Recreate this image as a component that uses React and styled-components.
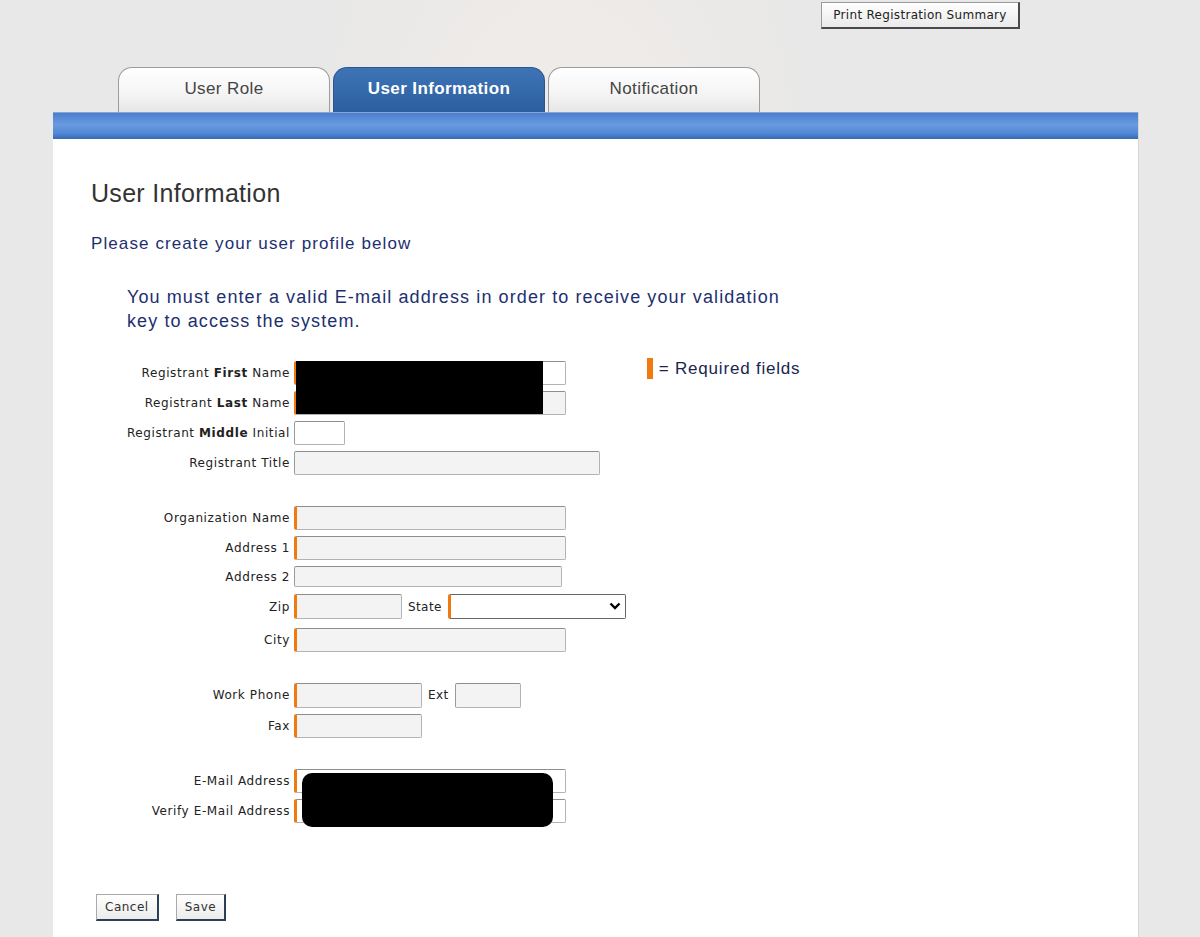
import React from "react";
import styled, { createGlobalStyle } from "styled-components";

const GlobalStyle = createGlobalStyle`
  html, body {
    margin: 0;
    padding: 0;
    background: #e8e8e8;
    font-family: "Liberation Sans", Arial, sans-serif;
  }
`;

const Page = styled.div`
  width: 1200px;
  height: 937px;
  overflow: hidden;
  background: radial-gradient(ellipse at 560px 140px, #f1ece8 0%, #e8e8e8 30%);
`;

const TopBar = styled.div`
  display: flex;
  justify-content: flex-end;
  padding: 2px 180px 0 0;
  height: 27px;
`;

const PrintButton = styled.button`
  width: 199px;
  height: 27px;
  font-family: "DejaVu Sans", Verdana, sans-serif;
  font-size: 12px;
  letter-spacing: 0.3px;
  color: #222;
  background: linear-gradient(#ffffff, #e9e9e9);
  border: 1px solid #9a9a9a;
  border-right: 2px solid #4a4a4a;
  border-bottom: 2px solid #4a4a4a;
  padding: 0;
`;

const Tabs = styled.div`
  display: flex;
  gap: 3px;
  margin: 38px 0 0 118px;
  height: 45px;
`;

const Tab = styled.div`
  width: 212px;
  height: 45px;
  box-sizing: border-box;
  display: flex;
  align-items: center;
  justify-content: center;
  border-radius: 14px 14px 0 0;
  border: 1px solid ${(p) => (p.$active ? "#2a5590" : "#9c9c9c")};
  border-bottom: none;
  background: ${(p) =>
    p.$active
      ? "linear-gradient(#3e74b6, #2b5f9f)"
      : "linear-gradient(#ffffff, #f4f4f4 60%, #e6e6e6)"};
  color: ${(p) => (p.$active ? "#ffffff" : "#444")};
  font-size: 17px;
  letter-spacing: 0.4px;
  font-weight: ${(p) => (p.$active ? "bold" : "normal")};
  padding-bottom: 2px;
`;

const Panel = styled.div`
  margin-left: 53px;
  width: 1085px;
  background: #fff;
  border-right: 1px solid #d6d6d6;
  height: 830px;
`;

const BlueBar = styled.div`
  height: 26px;
  background: linear-gradient(#4a7fcf, #6a9ae0 45%, #4f86d4 80%, #3669b0);
  border-top: 1px solid #8aa6cf;
`;

const Content = styled.div`
  padding: 40px 0 0 38px;
`;

const Heading = styled.h2`
  margin: 0;
  font-size: 25px;
  font-weight: normal;
  letter-spacing: 0.3px;
  color: #333;
  line-height: 28px;
`;

const Intro = styled.p`
  margin: 25px 0 0;
  font-size: 17px;
  letter-spacing: 1.1px;
  color: #1d2f6f;
  line-height: 24px;
`;

const Notice = styled.p`
  margin: 29px 0 0 36px;
  width: 680px;
  font-size: 18px;
  letter-spacing: 1.1px;
  color: #1d2f6f;
  line-height: 24px;
`;

const FormArea = styled.div`
  display: flex;
  align-items: flex-start;
  margin-top: 25px;
`;

const Form = styled.div`
  position: relative;
`;

const Row = styled.div`
  display: flex;
  align-items: center;
  height: ${(p) => p.$h || 30}px;
  margin-top: ${(p) => p.$mt || 0}px;
`;

const Label = styled.label`
  width: 199px;
  text-align: right;
  font-family: "DejaVu Sans", Verdana, sans-serif;
  font-size: 12px;
  letter-spacing: 0.6px;
  color: #222;
  padding-right: 4px;
  flex-shrink: 0;
  white-space: nowrap;
`;

const InlineLabel = styled.label`
  font-family: "DejaVu Sans", Verdana, sans-serif;
  font-size: 12px;
  letter-spacing: 0.4px;
  color: #222;
  margin: 0 6px 0 6px;
`;

const Input = styled.input`
  box-sizing: border-box;
  width: ${(p) => p.$w}px;
  height: ${(p) => p.$hh || 24}px;
  background: ${(p) => (p.$white ? "#fff" : "#f3f3f3")};
  border: 1px solid #b3b3b3;
  border-top-color: #8e8e8e;
  border-left: ${(p) => (p.$req ? "3px solid #f07a10" : "1px solid #9a9a9a")};
  border-radius: 2px;
  padding: 0 4px;
  font-size: 12px;
`;

const SelectWrap = styled.div`
  position: relative;
  width: 178px;
  height: 25px;
`;

const Select = styled.select`
  appearance: none;
  box-sizing: border-box;
  width: 100%;
  height: 100%;
  background: #fff;
  border: 1px solid #666;
  border-left: 3px solid #f07a10;
  border-radius: 2px;
`;

const Chevron = styled.svg`
  position: absolute;
  right: 5px;
  top: 7px;
  pointer-events: none;
`;

const Redaction = styled.div`
  position: absolute;
  background: #000;
  border-radius: ${(p) => p.$r || 0}px;
`;

const Legend = styled.div`
  display: flex;
  align-items: center;
  gap: 6px;
  margin-left: 21px;
  font-size: 17px;
  letter-spacing: 0.8px;
  color: #1a2650;
`;

const LegendBar = styled.span`
  display: inline-block;
  width: 6px;
  height: 21px;
  background: #f07a10;
`;

const Buttons = styled.div`
  display: flex;
  gap: 17px;
  margin: 68px 0 0 5px;
`;

const SmallButton = styled.button`
  height: 27px;
  padding: 0 8px;
  font-family: "DejaVu Sans", Verdana, sans-serif;
  font-size: 12px;
  letter-spacing: 0.5px;
  color: #333;
  background: linear-gradient(#ffffff, #ececec);
  border: 1px solid #aaa;
  border-right: 2px solid #2d3f57;
  border-bottom: 2px solid #2d3f57;
`;

function Field({ label, w, req, white, mt, h }) {
  return (
    <Row $mt={mt} $h={h}>
      <Label>{label}</Label>
      <Input $w={w} $req={req} $white={white} />
    </Row>
  );
}

export default function App() {
  return (
    <Page>
      <GlobalStyle />
      <TopBar>
        <PrintButton>Print Registration Summary</PrintButton>
      </TopBar>
      <Tabs>
        <Tab>User Role</Tab>
        <Tab $active>User Information</Tab>
        <Tab>Notification</Tab>
      </Tabs>
      <Panel>
        <BlueBar />
        <Content>
          <Heading>User Information</Heading>
          <Intro>Please create your user profile below</Intro>
          <Notice>
            You must enter a valid E-mail address in order to receive your validation key to
            access the system.
          </Notice>
          <FormArea>
            <Form>
              <Field
                label={<>Registrant <b>First</b> Name</>}
                w={272}
                req
                white
              />
              <Field label={<>Registrant <b>Last</b> Name</>} w={272} req />
              <Field label={<>Registrant <b>Middle</b> Initial</>} w={51} white />
              <Field label="Registrant Title" w={306} />
              <Field label="Organization Name" w={272} req mt={25} />
              <Field label="Address 1" w={272} req />
              <Row $h={27}>
                <Label>Address 2</Label>
                <Input $w={268} $hh={21} />
              </Row>
              <Row $h={33}>
                <Label>Zip</Label>
                <Input $w={108} $req $hh={25} />
                <InlineLabel>State</InlineLabel>
                <SelectWrap>
                  <Select defaultValue="">
                    <option value="" />
                  </Select>
                  <Chevron width="12" height="10" viewBox="0 0 12 10">
                    <path d="M1.5 2.5 L6 7 L10.5 2.5" fill="none" stroke="#000" strokeWidth="2.4" />
                  </Chevron>
                </SelectWrap>
              </Row>
              <Field label="City" w={272} req h={33} />
              <Row $mt={24} $h={30}>
                <Label>Work Phone</Label>
                <Input $w={128} $req $hh={25} />
                <InlineLabel>Ext</InlineLabel>
                <Input $w={66} $hh={25} />
              </Row>
              <Field label="Fax" w={128} req h={31} />
              <Field label="E-Mail Address" w={272} req white mt={25} />
              <Field label="Verify E-Mail Address" w={272} req white />
              <Redaction style={{ left: 205, top: 3, width: 247, height: 53 }} />
              <Redaction $r={10} style={{ left: 211, top: 415, width: 251, height: 54 }} />
            </Form>
            <Legend>
              <LegendBar />
              <span>= Required fields</span>
            </Legend>
          </FormArea>
          <Buttons>
            <SmallButton>Cancel</SmallButton>
            <SmallButton>Save</SmallButton>
          </Buttons>
        </Content>
      </Panel>
    </Page>
  );
}
